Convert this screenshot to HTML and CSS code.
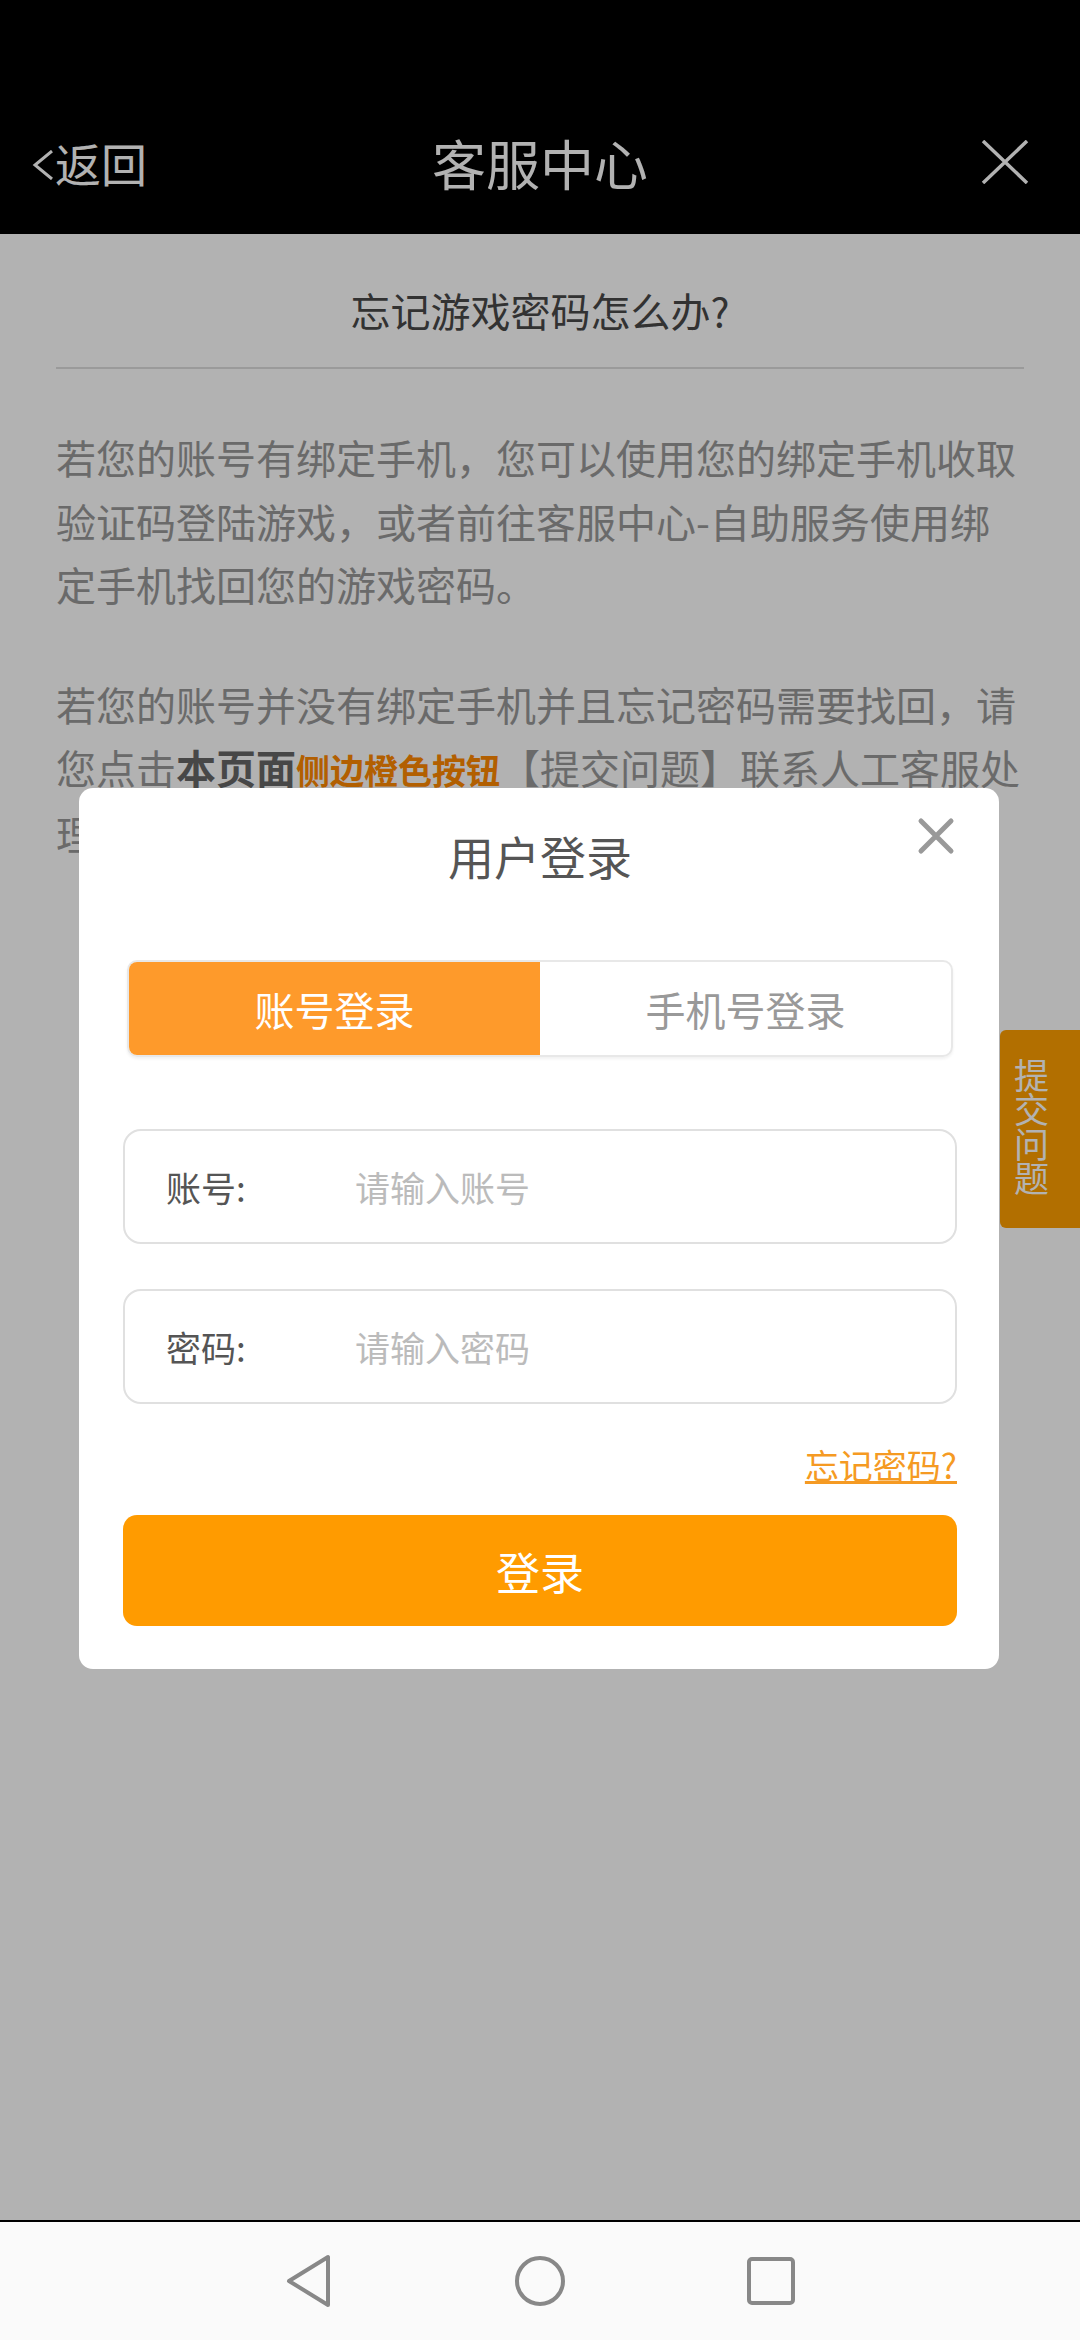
FILE: index.html
```html
<!DOCTYPE html>
<html lang="zh-CN">
<head>
  <meta charset="UTF-8">
  <title>客服中心</title>
  <link rel="stylesheet" href="styles.css">
</head>
<body>
  <div class="app">

    <!-- Top bar -->
    <header class="topbar">
      <div class="back">
        <svg class="back-arrow" width="22" height="30" viewBox="0 0 22 30"><polyline points="20,1 3,15 20,29" fill="none" stroke="#fff" stroke-width="3"/></svg>
        <span>返回</span>
      </div>
      <div class="page-title">客服中心</div>
      <svg class="close" width="48" height="44" viewBox="0 0 48 44"><path d="M2 1 L46 43 M46 1 L2 43" stroke="#fff" stroke-width="3.5" fill="none"/></svg>
    </header>

    <!-- Article -->
    <main class="content">
      <h2 class="question">忘记游戏密码怎么办?</h2>
      <div class="article">
        <p>若您的账号有绑定手机，您可以使用您的绑定手机收取验证码登陆游戏，或者前往客服中心-自助服务使用绑定手机找回您的游戏密码。</p>
        <p>若您的账号并没有绑定手机并且忘记密码需要找回，请您点击<b class="hl-dark">本页面</b><b class="hl-orange">侧边橙色按钮</b>【提交问题】联系人工客服处理。</p>
      </div>
    </main>

    <div class="side-tab"><span>提交问题</span></div>

    <!-- Dim layer -->
    <div class="mask"></div>

    <!-- Login dialog -->
    <div class="modal">
      <h3 class="modal-title">用户登录</h3>
      <svg class="modal-close" width="38" height="38" viewBox="0 0 38 38"><path d="M4 4 L34 34 M34 4 L4 34" stroke="#999" stroke-width="5" stroke-linecap="round" fill="none"/></svg>

      <div class="tabs">
        <div class="tab active">账号登录</div>
        <div class="tab">手机号登录</div>
      </div>

      <div class="field">
        <label>账号:</label>
        <input type="text" placeholder="请输入账号">
      </div>
      <div class="field">
        <label>密码:</label>
        <input type="password" placeholder="请输入密码">
      </div>

      <div class="forgot"><a href="#">忘记密码?</a></div>
      <button class="login-btn">登录</button>
    </div>

    <!-- System navigation -->
    <footer class="sysbar">
      <svg width="56" height="56" viewBox="0 0 56 56"><path d="M47 4 L47 52 L8 28 Z" fill="none" stroke="#888" stroke-width="4" stroke-linejoin="round"/></svg>
      <svg width="56" height="56" viewBox="0 0 56 56"><circle cx="28" cy="28" r="23" fill="none" stroke="#888" stroke-width="4"/></svg>
      <svg width="56" height="56" viewBox="0 0 56 56"><rect x="6" y="6" width="44" height="44" rx="3" fill="none" stroke="#888" stroke-width="4"/></svg>
    </footer>
  </div>
</body>
</html>
```

FILE: styles.css
```css
/* Base */
body {
  margin: 0;
  font-family: "Noto Sans CJK SC", "Noto Sans", sans-serif;
  background: #fff;
}

.app {
  position: relative;
  width: 1080px;
  height: 2340px;
  display: flex;
  flex-direction: column;
  overflow: hidden;
}

/* Top bar */
.topbar {
  height: 234px;
  box-sizing: border-box;
  padding: 90px 32px 0;
  background: #000;
  color: #fff;
  display: grid;
  grid-template-columns: 1fr auto 1fr;
  align-items: center;
}

.back {
  display: flex;
  align-items: center;
  font-size: 46px;
}

.back-arrow {
  margin: 6px 1px 0 0;
}

.page-title {
  font-size: 54px;
}

.close {
  justify-self: end;
  margin-right: 19px;
}

/* Article */
.content {
  flex: 1;
  padding: 0 56px;
}

.question {
  margin: 44px 0 0;
  padding-bottom: 25px;
  border-bottom: 2px solid #ddd;
  font-size: 40px;
  font-weight: normal;
  line-height: 64px;
  text-align: center;
  color: #484848;
}

.article p {
  margin: 57px 0 0;
  font-size: 40px;
  line-height: 63.5px;
  color: #999;
}

.article p + p {
  margin-top: 56px;
}

.hl-dark {
  color: #666;
}

.hl-orange {
  color: #ff8800;
  font-size: 34px;
}

/* Floating side button */
.side-tab {
  position: absolute;
  right: 0;
  top: 1030px;
  width: 80px;
  height: 198px;
  box-sizing: border-box;
  padding: 27px 0 0 14px;
  background: #ffa000;
  border-radius: 6px 0 0 6px;
  color: #fff;
  font-size: 35px;
  line-height: 34.3px;
}

.side-tab span {
  display: block;
  width: 1em;
}

.mask {
  position: absolute;
  left: 0;
  top: 0;
  width: 100%;
  height: 2220px;
  background: rgba(0, 0, 0, 0.3);
}

/* Login dialog */
.modal {
  position: absolute;
  top: 788px;
  left: 79px;
  width: 920px;
  box-sizing: border-box;
  padding: 37px 42px 43px 44px;
  background: #fff;
  border-radius: 14px;
}

.modal-title {
  margin: 0;
  font-size: 46px;
  font-weight: normal;
  line-height: 60px;
  text-align: center;
  color: #555;
}

.modal-close {
  position: absolute;
  top: 29px;
  right: 44px;
}

.tabs {
  display: flex;
  height: 97px;
  margin: 75px 4px 0;
  box-sizing: border-box;
  border: 2px solid #e8e8e8;
  border-radius: 10px;
  overflow: hidden;
  box-shadow: 0 2px 3px rgba(0, 0, 0, 0.06);
}

.tab {
  flex: 1;
  display: flex;
  align-items: center;
  justify-content: center;
  font-size: 40px;
  color: #999;
}

.tab.active {
  background: #fe9a2b;
  color: #fff;
}

.field {
  height: 115px;
  margin-top: 72px;
  box-sizing: border-box;
  padding-left: 41px;
  border: 2px solid #e0e0e0;
  border-radius: 18px;
  display: flex;
  align-items: center;
}

.field + .field {
  margin-top: 45px;
}

.field label {
  width: 189px;
  flex-shrink: 0;
  font-size: 35px;
  color: #555;
}

.field input {
  flex: 1;
  min-width: 0;
  padding: 0;
  border: none;
  outline: none;
  background: transparent;
  font-family: inherit;
  font-size: 35px;
  color: #333;
}

.field input::placeholder {
  color: #bbb;
}

.forgot {
  margin-top: 36px;
  line-height: 50px;
  text-align: right;
  font-size: 34px;
}

.forgot a {
  color: #f59a23;
}

.login-btn {
  display: block;
  width: 100%;
  height: 111px;
  margin-top: 25px;
  border: none;
  border-radius: 14px;
  background: #ff9b00;
  color: #fff;
  font-family: inherit;
  font-size: 44px;
}

/* System navigation bar */
.sysbar {
  height: 120px;
  box-sizing: border-box;
  border-top: 2px solid #000;
  background: #fafafa;
  display: flex;
  justify-content: center;
  align-items: center;
  gap: 175px;
}
```
